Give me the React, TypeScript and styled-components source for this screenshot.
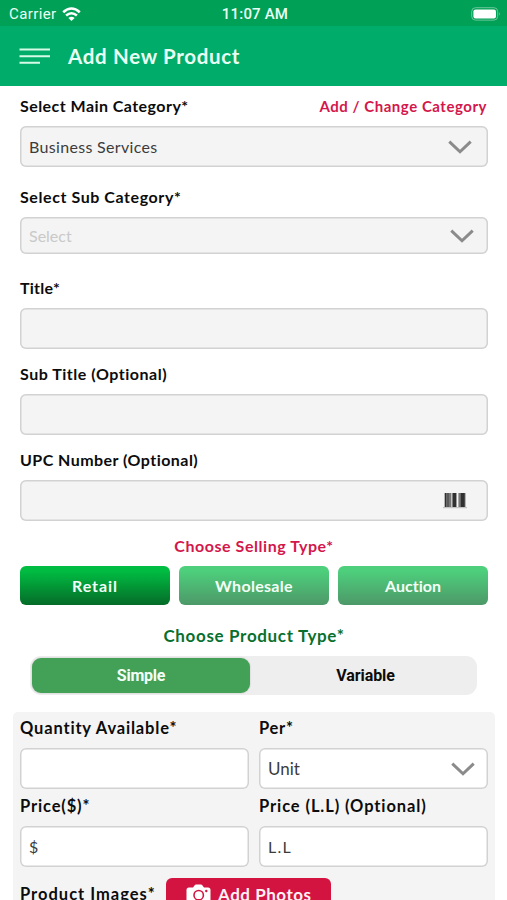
import React from "react";
import styled, { createGlobalStyle } from "styled-components";

const Global = createGlobalStyle`
  * { box-sizing: border-box; }
  html, body { margin: 0; background: #fff; }
  body {
    width: 507px;
    height: 900px;
    overflow: hidden;
    font-family: Lato, sans-serif;
    font-variant-ligatures: none;
    color: #0c0c0c;
  }
  button { border: 0; padding: 0; font-family: inherit; font-variant-ligatures: none; }
`;

const Screen = styled.div`
  width: 507px;
  height: 900px;
  overflow: hidden;
`;

const StatusBar = styled.div`
  display: grid;
  grid-template-columns: 1fr auto 1fr;
  align-items: center;
  height: 26px;
  padding: 2px 6px 0 9px;
  background: #00a056;
  color: #e9fff4;
  font: 400 15px/24px Roboto, sans-serif;
`;

const Carrier = styled.div`
  display: flex;
  align-items: center;
  gap: 5px;
  letter-spacing: 0.39px;
`;

const Clock = styled.div`
  font-weight: 500;
  letter-spacing: 0.18px;
`;

const BatteryHolder = styled.div`
  display: flex;
  justify-content: flex-end;
`;

const Header = styled.header`
  display: flex;
  align-items: center;
  gap: 18px;
  height: 60px;
  padding: 0 19px;
  background: #00ac6a;
`;

const Heading = styled.h1`
  margin: 0;
  color: #e9fff4;
  font-size: 20.5px;
  font-weight: 700;
  line-height: 24px;
  letter-spacing: 0.68px;
`;

const Form = styled.main`
  padding: 10px 19px 0 20px;
`;

const Field = styled.div<{ $after?: number }>`
  margin-bottom: ${(p) => p.$after ?? 15}px;
`;

const LabelRow = styled.div`
  display: flex;
  justify-content: space-between;
  align-items: center;
  height: 20px;
  margin-bottom: 10px;
`;

const Label = styled.label<{ $size?: number; $spacing: number }>`
  display: block;
  font-size: ${(p) => p.$size ?? 16}px;
  font-weight: 700;
  line-height: 20px;
  letter-spacing: ${(p) => p.$spacing}px;
  white-space: nowrap;
`;

const CategoryLink = styled.a`
  margin-right: 1px;
  color: #d3174b;
  font-size: 15px;
  font-weight: 700;
  line-height: 20px;
  letter-spacing: 0.53px;
`;

const Box = styled.div<{ $height?: number; $white?: boolean; $inset?: number }>`
  display: flex;
  align-items: center;
  justify-content: space-between;
  height: ${(p) => p.$height ?? 41}px;
  padding: 0 ${(p) => p.$inset ?? 16}px 0 9px;
  border-radius: 6px;
  background: ${(p) => (p.$white ? "#fff" : "#f4f4f4")};
  box-shadow: inset 0 0 0 1.5px #d2d2d2;
`;

const Value = styled.span<{ $size?: number; $spacing?: number; $faint?: boolean }>`
  color: ${(p) => (p.$faint ? "#c9c9c9" : "#3c3c3c")};
  font-size: ${(p) => p.$size ?? 16}px;
  line-height: 20px;
  letter-spacing: ${(p) => p.$spacing ?? 0}px;
`;

const SectionTitle = styled.h2<{ $color: string; $size: number; $spacing: number }>`
  margin: 0;
  color: ${(p) => p.$color};
  font-size: ${(p) => p.$size}px;
  font-weight: 700;
  line-height: 20px;
  letter-spacing: ${(p) => p.$spacing}px;
  text-align: center;
`;

const SellingTypes = styled.div`
  display: grid;
  grid-template-columns: repeat(3, 1fr);
  gap: 9px;
  margin: 10px 0 21px;
`;

const TypeButton = styled.button<{ $active?: boolean; $spacing: number }>`
  height: 39px;
  border-radius: 6px;
  background: ${(p) =>
    p.$active
      ? "linear-gradient(#00bd42 12%, #056b28)"
      : "linear-gradient(#4dcf7c 12%, #4d9868)"};
  color: #f3fff6;
  font-size: 16px;
  font-weight: 700;
  letter-spacing: ${(p) => p.$spacing}px;
`;

const Segments = styled.div`
  display: grid;
  grid-template-columns: 218px 1fr;
  height: 39px;
  margin: 10px 11px 17px 10px;
  padding: 2px;
  border-radius: 11px;
  background: #eee;
`;

const Segment = styled.button<{ $active?: boolean; $spacing: number }>`
  height: 35px;
  padding-left: ${(p) => (p.$active ? 0 : 6)}px;
  border-radius: 9px;
  background: ${(p) => (p.$active ? "#43a057" : "transparent")};
  box-shadow: ${(p) => (p.$active ? "0 0 2px rgba(0, 0, 0, 0.2)" : "none")};
  color: ${(p) => (p.$active ? "#f3fff6" : "#0c0c0c")};
  font: 700 16px/20px Roboto, sans-serif;
  letter-spacing: ${(p) => p.$spacing}px;
`;

const Panel = styled.section`
  height: 200px;
  margin: 0 -7px;
  padding: 6px 7px 0;
  border-radius: 5px;
  background: #f4f4f4;
`;

const Columns = styled.div`
  display: grid;
  grid-template-columns: 229px 229px;
  column-gap: 10px;
`;

const Cell = styled.div`
  display: grid;
  grid-template-rows: 20px 41px;
  row-gap: 10px;
  height: 78px;
`;

const Images = styled.div`
  display: flex;
  align-items: flex-start;
  gap: 10px;
  padding-top: 4px;
`;

const ImagesLabel = styled(Label)`
  width: 136px;
  padding-top: 6px;
`;

const PhotoButton = styled.button`
  display: flex;
  align-items: center;
  gap: 7px;
  width: 165px;
  height: 34px;
  padding-left: 20px;
  border-radius: 6px;
  background: #d31441;
  color: #fff2f5;
  font-size: 17px;
  font-weight: 700;
  line-height: 20px;
  letter-spacing: 0.52px;
  white-space: nowrap;
`;

const Wifi = () => (
  <svg width="19" height="15" viewBox="0 0 19 15" fill="none" stroke="#fff" strokeWidth="2.6">
    <path d="M1.2 5.2Q9.5-2.200 17.8 5.2M4.1 8.6Q9.5 3.900 14.9 8.6" />
    <path d="M9.5 14 6.4 10.900Q9.5 8.400 12.600 10.900Z" fill="#fff" stroke="none" />
  </svg>
);

const Battery = () => (
  <svg width="30" height="14" viewBox="0 0 30 14">
    <rect x="0.7" y="0.7" width="26" height="12.4" rx="3.8" fill="none" stroke="#6cc79b" strokeWidth="1" />
    <rect x="2.4" y="2.4" width="22.6" height="9" rx="2.2" fill="#fff" />
    <path d="M28 5q1.5 1.9 0 3.8z" fill="#7fd0a9" />
  </svg>
);

const MenuIcon = () => (
  <svg width="31" height="18" viewBox="0 0 31 18" stroke="#d5fbe8" strokeWidth="2">
    <path d="M0.5 2.4H31M0.5 9.3H31M0.5 15.8H21" />
  </svg>
);

const Chevron = () => (
  <svg width="24" height="16" viewBox="0 0 24 16" fill="none" stroke="#8b8b8b" strokeWidth="3">
    <path d="M1.3 2.600 12 12.800 22.7 2.600" />
  </svg>
);

const Barcode = () => (
  <svg width="24" height="17" viewBox="0 0 24 17">
    <path fill="#777" d="M1.5 1h21v14h-21z" />
    <path fill="#303030" d="M2 1h1.2v14H2zM4.6 1h.8v14h-.8zM9.7 1h3.6v14H9.7zM17.8 1h3.8v14h-3.8z" />
    <path fill="#f4f4f4" d="M8.4 1h.8v14h-.8zM13.6 1h1.8v14h-1.8z" />
    <path fill="#b8b8b8" d="M0 15.2h24v1H0z" />
  </svg>
);

const Camera = () => (
  <svg width="25" height="22" viewBox="0 0 25 22">
    <path
      fill="#fff"
      d="M3 3.5h4L8.7 1.2Q9.2.5 10 .5h5q.8 0 1.3.7L18 3.5h4q2.5 0 2.5 2.5v13q0 2.5-2.5 2.5H3Q.5 21.5.5 19V6Q.5 3.5 3 3.5z"
    />
    <circle cx="12.7" cy="11.2" r="4.7" fill="none" stroke="#d31441" strokeWidth="1.6" />
    <circle cx="20.3" cy="7" r="1.2" fill="#d31441" />
  </svg>
);

export default function App() {
  return (
    <Screen>
      <Global />
      <StatusBar>
        <Carrier>Carrier <Wifi /></Carrier>
        <Clock>11:07 AM</Clock>
        <BatteryHolder><Battery /></BatteryHolder>
      </StatusBar>
      <Header>
        <MenuIcon />
        <Heading>Add New Product</Heading>
      </Header>
      <Form>
        <Field $after={20}>
          <LabelRow>
            <Label $spacing={0.45}>Select Main Category*</Label>
            <CategoryLink>Add / Change Category</CategoryLink>
          </LabelRow>
          <Box><Value $spacing={0.32}>Business Services</Value><Chevron /></Box>
        </Field>
        <Field $after={24}>
          <LabelRow><Label $spacing={0.58}>Select Sub Category*</Label></LabelRow>
          <Box $height={37} $inset={14}><Value $faint>Select</Value><Chevron /></Box>
        </Field>
        <Field>
          <LabelRow><Label $spacing={0.25}>Title*</Label></LabelRow>
          <Box />
        </Field>
        <Field>
          <LabelRow><Label $spacing={0.52}>Sub Title (Optional)</Label></LabelRow>
          <Box />
        </Field>
        <Field>
          <LabelRow><Label $spacing={0.46}>UPC Number (Optional)</Label></LabelRow>
          <Box $inset={21}><span /><Barcode /></Box>
        </Field>
        <SectionTitle $color="#d3174b" $size={16} $spacing={0.55}>Choose Selling Type*</SectionTitle>
        <SellingTypes>
          <TypeButton $active $spacing={0.95}>Retail</TypeButton>
          <TypeButton $spacing={0.31}>Wholesale</TypeButton>
          <TypeButton $spacing={0}>Auction</TypeButton>
        </SellingTypes>
        <SectionTitle $color="#08702f" $size={17} $spacing={0.66}>Choose Product Type*</SectionTitle>
        <Segments>
          <Segment $active $spacing={-0.24}>Simple</Segment>
          <Segment $spacing={-0.08}>Variable</Segment>
        </Segments>
        <Panel>
          <Columns>
            <Cell>
              <Label $size={16.5} $spacing={0.83}>Quantity Available*</Label>
              <Box $white />
            </Cell>
            <Cell>
              <Label $size={16.5} $spacing={0.7}>Per*</Label>
              <Box $white $inset={13}><Value $size={17}>Unit</Value><Chevron /></Box>
            </Cell>
            <Cell>
              <Label $size={16.5} $spacing={0.85}>Price($)*</Label>
              <Box $white><Value>$</Value></Box>
            </Cell>
            <Cell>
              <Label $size={16.5} $spacing={0.9}>Price (L.L) (Optional)</Label>
              <Box $white><Value $spacing={1.3}>L.L</Value></Box>
            </Cell>
          </Columns>
          <Images>
            <ImagesLabel $size={16.5} $spacing={1}>Product Images*</ImagesLabel>
            <PhotoButton><Camera />Add Photos</PhotoButton>
          </Images>
        </Panel>
      </Form>
    </Screen>
  );
}
